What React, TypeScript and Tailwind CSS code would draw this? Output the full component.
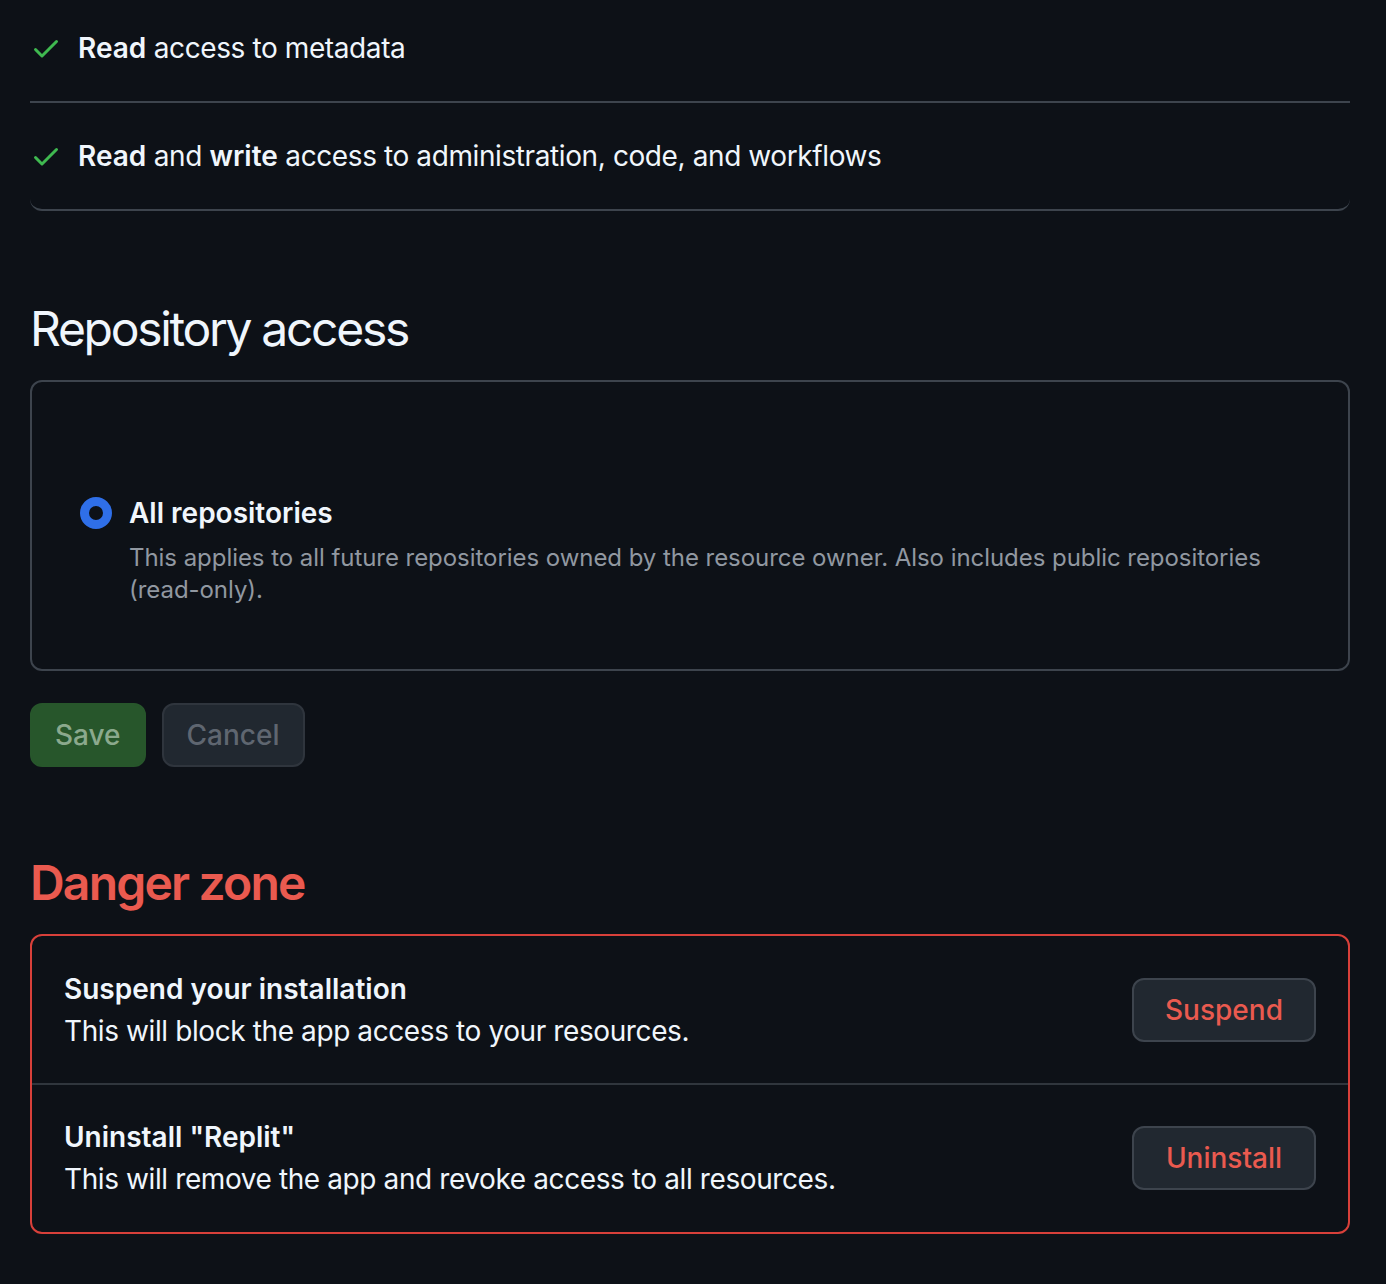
import React from "react";

function Check() {
  return (
    <svg width="32" height="32" viewBox="0 0 16 16" fill="#3fb950" className="shrink-0">
      <path d="M13.78 4.22a.75.75 0 0 1 0 1.06l-7.25 7.25a.75.75 0 0 1-1.06 0L2.22 9.28a.751.751 0 0 1 .018-1.042.751.751 0 0 1 1.042-.018L6 10.94l6.72-6.72a.75.75 0 0 1 1.06 0Z" />
    </svg>
  );
}

export default function App() {
  return (
    <div className="min-h-screen bg-[#0d1117] pl-[30px] pr-[36px] text-[#f0f6fc] font-['Inter',sans-serif] text-[28px] leading-[42px] tracking-[-0.4px]">
      <div className="rounded-b-[12px] border-b-2 border-[#3d444d]">
        <div className="flex h-[103px] items-center gap-[16px] border-b-2 border-[#3d444d] pb-[6px]">
          <Check />
          <span>
            <span className="font-semibold tracking-normal">Read</span> access to metadata
          </span>
        </div>
        <div className="flex h-[106px] items-center gap-[16px]">
          <Check />
          <span>
            <span className="font-semibold tracking-normal">Read</span> and{" "}
            <span className="font-semibold tracking-normal">write</span> access to administration, code, and workflows
          </span>
        </div>
      </div>

      <h2 className="mt-[82px] text-[48px] leading-[72px] font-normal tracking-[-2.3px]">Repository access</h2>

      <div className="mt-[15px] rounded-[12px] border-2 border-[#3d444d] pl-[48px] pr-[48px] pt-[110px] pb-[63px]">
        <div className="flex gap-[17px]">
          <div className="mt-[5px] h-[32px] w-[32px] shrink-0 rounded-full border-[9px] border-[#2f6fe8] bg-[#0d1117]" />
          <div>
            <div className="font-semibold tracking-normal">All repositories</div>
            <div className="mt-[8px] text-[24px] leading-[32px] text-[#9198a1] tracking-[-0.05px]">
              This applies to all future repositories owned by the resource owner. Also includes public repositories (read-only).
            </div>
          </div>
        </div>
      </div>

      <div className="mt-[32px] flex gap-[16px] tracking-normal">
        <button className="h-[64px] rounded-[12px] border-2 border-[#27562b] bg-[#27562b] px-[23px] font-medium text-[#8ba98d]">
          Save
        </button>
        <button className="h-[64px] rounded-[12px] border-2 border-[#2f353d] bg-[#212830] px-[23px] font-medium text-[#5f6670]">
          Cancel
        </button>
      </div>

      <h2 className="mt-[80px] text-[48px] leading-[72px] font-semibold text-[#ea5a4f] tracking-[-1.8px]">Danger zone</h2>

      <div className="mt-[15px] mb-[48px] rounded-[12px] border-2 border-[#d8403a]">
        <div className="flex items-center justify-between border-b-2 border-[#30363d] px-[32px] pt-[32px] pb-[31px]">
          <div>
            <div className="font-semibold tracking-normal">Suspend your installation</div>
            <div>This will block the app access to your resources.</div>
          </div>
          <button className="flex h-[64px] w-[184px] items-center justify-center rounded-[12px] border-2 border-[#3d444d] bg-[#212830] font-medium tracking-normal text-[#ea5a4f]">
            Suspend
          </button>
        </div>
        <div className="flex items-center justify-between px-[32px] pt-[31px] pb-[32px]">
          <div>
            <div className="font-semibold tracking-normal">Uninstall "Replit"</div>
            <div>This will remove the app and revoke access to all resources.</div>
          </div>
          <button className="flex h-[64px] w-[184px] items-center justify-center rounded-[12px] border-2 border-[#3d444d] bg-[#212830] font-medium tracking-normal text-[#ea5a4f]">
            Uninstall
          </button>
        </div>
      </div>
    </div>
  );
}
